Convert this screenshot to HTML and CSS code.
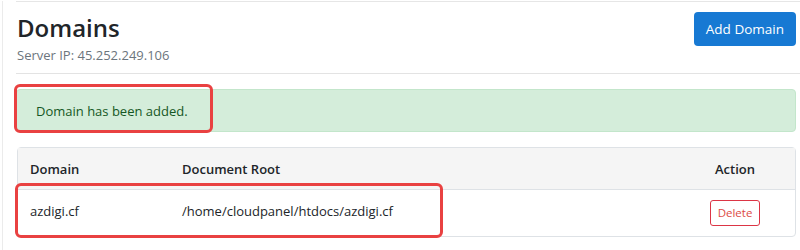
FILE: index.html
```html
<!DOCTYPE html>
<html lang="en">
<head>
  <meta charset="UTF-8" />
  <meta name="viewport" content="width=device-width, initial-scale=1.0"/>
  <title>Domains</title>
  <link rel="stylesheet" href="styles.css">
</head>
<body>
  <div class="page">
    <div class="content">
      <header class="page-header">
        <div>
          <h1>Domains</h1>
          <p class="subtitle">Server IP: 45.252.249.106</p>
        </div>
        <button class="btn-primary">Add Domain</button>
      </header>

      <div class="alert-success">
        Domain has been added.
        <span class="mark mark-alert"></span>
      </div>

      <div class="table-card">
        <table>
          <colgroup>
            <col class="col-domain">
            <col>
            <col class="col-action">
          </colgroup>
          <thead>
            <tr>
              <th>Domain</th>
              <th>Document Root</th>
              <th class="center">Action</th>
            </tr>
          </thead>
          <tbody>
            <tr>
              <td class="text">azdigi.cf</td>
              <td class="text">/home/cloudpanel/htdocs/azdigi.cf</td>
              <td class="center"><button class="btn-delete">Delete</button></td>
            </tr>
          </tbody>
        </table>
        <span class="mark mark-row"></span>
      </div>
    </div>
  </div>
</body>
</html>
```

FILE: styles.css
```css
* {
  box-sizing: border-box;
}
body {
  margin: 0;
  font-family: 'Open Sans', 'Liberation Sans', sans-serif;
  background: #fff;
  color: #212529;
}
.page {
  margin-left: 2px;
  min-height: 250px;
  border-left: 1px solid #ebebeb;
  padding-left: 13px;
}
.content {
  margin-top: 1px;
  border-top: 1px solid #e6e6e6;
}
.page-header {
  display: flex;
  justify-content: space-between;
  align-items: flex-start;
  padding: 10px 4px 9px 1px;
  border-bottom: 1px solid #e3e3e3;
}
h1 {
  margin: 0;
  font-size: 24px;
  line-height: 32px;
  font-weight: 600;
  color: #212529;
}
.subtitle {
  margin: 2px 0 0;
  font-size: 13px;
  line-height: 18px;
  color: #6c757d;
}
.btn-primary {
  font-family: inherit;
  font-size: 13.5px;
  line-height: 20px;
  padding: 7px 12px;
  border: none;
  border-radius: 4px;
  background: #1779d3;
  color: #fff;
  cursor: pointer;
}
.alert-success {
  position: relative;
  margin: 15px 4px 0 0;
  padding: 12px 19px 10px;
  font-size: 13px;
  line-height: 19px;
  background: #d4edda;
  border: 1px solid #c3e6cb;
  border-radius: 4px;
  color: #155724;
}
.table-card {
  position: relative;
  margin: 15px 4px 0 1px;
  border: 1px solid #dee2e6;
  border-radius: 4px;
  overflow: visible;
}
table {
  width: 100%;
  border-collapse: collapse;
  table-layout: fixed;
  font-size: 13px;
  line-height: 18px;
}
.col-domain {
  width: 152px;
}
.col-action {
  width: 120px;
}
th {
  text-align: left;
  font-weight: 600;
  padding: 12px 12px 11px;
  background: #f5f5f5;
  border-bottom: 1px solid #dee2e6;
}
td {
  padding: 10px 12px;
  vertical-align: middle;
}
td.text {
  padding-bottom: 14px;
}
.center {
  text-align: center;
}
.btn-delete {
  font-family: inherit;
  font-size: 11.5px;
  line-height: 16px;
  padding: 4px 7px;
  background: #fff;
  border: 1px solid #dc3545;
  border-radius: 3px;
  color: #dc4a45;
  cursor: pointer;
}
/* red highlight boxes from the screenshot */
.mark {
  position: absolute;
  border: 3px solid #e94141;
  border-radius: 6px;
  pointer-events: none;
}
.mark-alert {
  left: -3px;
  top: -6px;
  width: 199px;
  height: 49px;
}
.mark-row {
  left: -3px;
  top: 35px;
  width: 428px;
  height: 55px;
}
```
